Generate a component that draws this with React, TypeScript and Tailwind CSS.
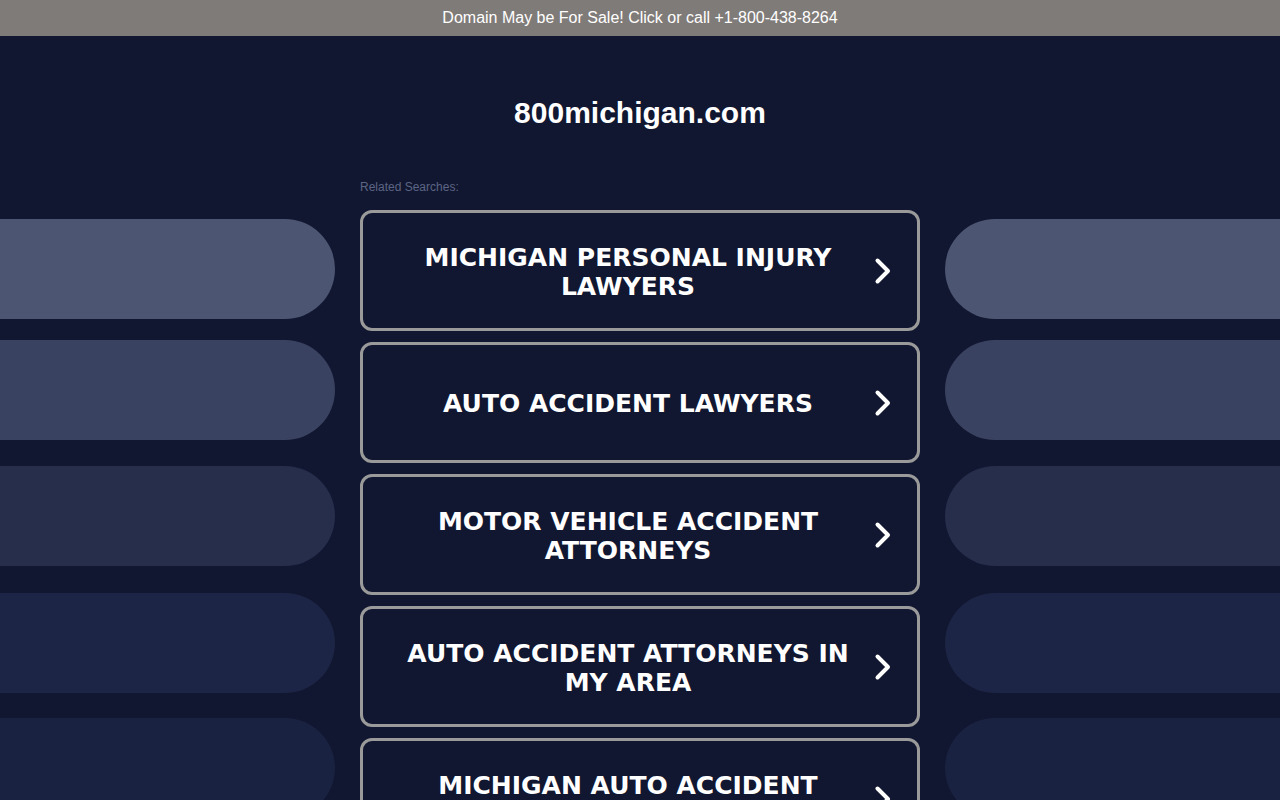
import React from "react";

const pills = [
  { c: "bg-[#4c5672]", m: "mt-0" },
  { c: "bg-[#3a4261]", m: "mt-[21px]" },
  { c: "bg-[#262e4c]", m: "mt-[26px]" },
  { c: "bg-[#1c2545]", m: "mt-[27px]" },
  { c: "bg-[#1a2242]", m: "mt-[25px]" },
];

const items = [
  "MICHIGAN PERSONAL INJURY LAWYERS",
  "AUTO ACCIDENT LAWYERS",
  "MOTOR VEHICLE ACCIDENT ATTORNEYS",
  "AUTO ACCIDENT ATTORNEYS IN MY AREA",
  "MICHIGAN AUTO ACCIDENT LAWYERS",
];

function Chevron() {
  return (
    <svg width="20" height="28" viewBox="0 0 20 28" className="shrink-0">
      <path d="M4.5 3.5 L15 14 L4.5 24.5" fill="none" stroke="white" strokeWidth="4" strokeLinecap="round" strokeLinejoin="round" />
    </svg>
  );
}

export default function App() {
  return (
    <div className="h-[800px] overflow-hidden bg-[#111730]">
      <div className="h-9 bg-[#7f7b78] flex items-center justify-center text-white text-[16px] font-['Liberation_Sans',Arial,sans-serif]">
        Domain May be For Sale! Click or call +1-800-438-8264
      </div>
      <div className="flex gap-[25px]">
        <div className="w-[335px] shrink-0 pt-[183px] flex flex-col">
          {pills.map((p, i) => (
            <div key={i} className={`h-[100px] shrink-0 rounded-r-full ${p.c} ${p.m}`} />
          ))}
        </div>
        <div className="w-[560px] shrink-0 flex flex-col">
          <div className="pt-[59px] text-center text-white font-bold text-[30px] leading-[36px] font-['Liberation_Sans',Arial,sans-serif]">
            800michigan.com
          </div>
          <div className="mt-[48px] text-[12px] leading-[16px] text-[#5c6585] font-['Liberation_Sans',Arial,sans-serif]">
            Related Searches:
          </div>
          <div className="mt-[15px] flex flex-col gap-[11px]">
            {items.map((t) => (
              <div key={t} className="h-[121px] shrink-0 border-[3px] border-[#9a9a9a] rounded-[12px] flex items-center">
                <div className="ml-[37px] w-[456px] pt-[2px] text-center text-white font-bold text-[25px] leading-[29px] font-['DejaVu_Sans',Verdana,sans-serif]">
                  {t}
                </div>
                <div className="ml-[17px]">
                  <Chevron />
                </div>
              </div>
            ))}
          </div>
        </div>
        <div className="w-[335px] shrink-0 pt-[183px] flex flex-col">
          {pills.map((p, i) => (
            <div key={i} className={`h-[100px] shrink-0 rounded-l-full ${p.c} ${p.m}`} />
          ))}
        </div>
      </div>
    </div>
  );
}
